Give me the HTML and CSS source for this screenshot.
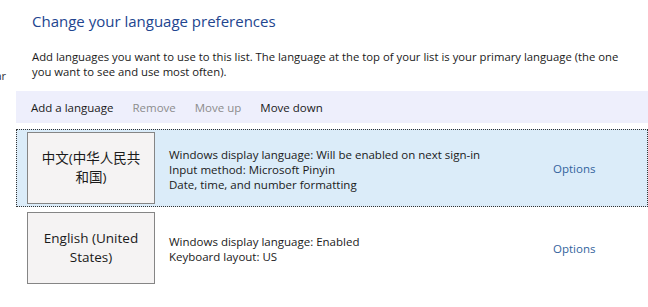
FILE: index.html
```html
<!DOCTYPE html>
<html lang="en">
<head>
    <meta charset="UTF-8">
    <title>Language</title>
    <link rel="stylesheet" href="styles.css">
</head>
<body>
    <div class="window">
        <!-- Left navigation pane, mostly scrolled out of view -->
        <div class="nav-pane">
            <span class="nav-item">Advanced settings for language bar</span>
        </div>

        <div class="main">
            <div class="title">Change your language preferences</div>
            <p class="intro">Add languages you want to use to this list. The language at the top of your list is your primary language (the one you want to see and use most often).</p>

            <!-- Toolbar -->
            <div class="toolbar">
                <span class="tool">Add a language</span>
                <span class="tool disabled">Remove</span>
                <span class="tool disabled">Move up</span>
                <span class="tool">Move down</span>
            </div>

            <!-- Language list -->
            <div class="lang-list">
                <div class="lang-row selected">
                    <div class="lang-tile">中文(中华人民共和国)</div>
                    <div class="lang-info">
                        <div>Windows display language: Will be enabled on next sign-in</div>
                        <div>Input method: Microsoft Pinyin</div>
                        <div>Date, time, and number formatting</div>
                    </div>
                    <a class="options" href="#">Options</a>
                </div>
                <div class="lang-row">
                    <div class="lang-tile">English (United States)</div>
                    <div class="lang-info">
                        <div>Windows display language: Enabled</div>
                        <div>Keyboard layout: US</div>
                    </div>
                    <a class="options" href="#">Options</a>
                </div>
            </div>
        </div>
    </div>
</body>
</html>
```

FILE: styles.css
```css
/* Base */
* {
    margin: 0;
    padding: 0;
    box-sizing: border-box;
}

body {
    background: #fff;
    color: #1a1a1a;
    font-family: 'Open Sans', 'Noto Sans CJK SC', sans-serif;
    font-size: 11.5px;
}

.window {
    display: flex;
    width: 648px;
    height: 307px;
    overflow: hidden;
}

/* Left pane (only its last letter shows) */
.nav-pane {
    width: 16px;
    flex-shrink: 0;
    overflow: hidden;
    display: flex;
    justify-content: flex-end;
    padding-top: 68px;
}

.nav-item {
    white-space: nowrap;
    font-size: 11px;
    line-height: 15px;
    color: #333;
    padding-right: 10px;
}

.main {
    flex: 1;
    min-width: 0;
}

.title {
    padding: 11px 0 0 16px;
    font-size: 15px;
    color: #22458f;
    height: 47px;
}

.intro {
    padding-left: 16px;
    padding-top: 2px;
    width: 616px;
    line-height: 15px;
    font-size: 11.3px;
}

/* Toolbar */
.toolbar {
    margin-top: 12px;
    height: 32px;
    background: #eeeffc;
    display: flex;
    align-items: center;
    gap: 19px;
    padding-left: 15px;
    font-size: 11.5px;
}

.tool {
    color: #1a1a1a;
}

.tool.disabled {
    color: #8c8c8c;
}

/* Language list */
.lang-list {
    margin-top: 6px;
    display: flex;
    flex-direction: column;
    gap: 2px;
}

.lang-row {
    height: 78px;
    display: flex;
    align-items: center;
    padding-left: 10px;
    border: 1px dotted transparent;
}

.lang-row.selected {
    background: #dbecf9;
    border-color: #333;
}

.lang-tile {
    width: 128px;
    height: 72px;
    flex-shrink: 0;
    background: #f5f3f3;
    border: 1px solid #858585;
    display: flex;
    align-items: center;
    justify-content: center;
    text-align: center;
    padding: 0 12px;
    font-size: 13.5px;
    line-height: 19px;
}

.lang-info {
    width: 398px;
    padding: 2px 0 0 14px;
    line-height: 15px;
}

.options {
    color: #33639c;
    text-decoration: none;
}
```
